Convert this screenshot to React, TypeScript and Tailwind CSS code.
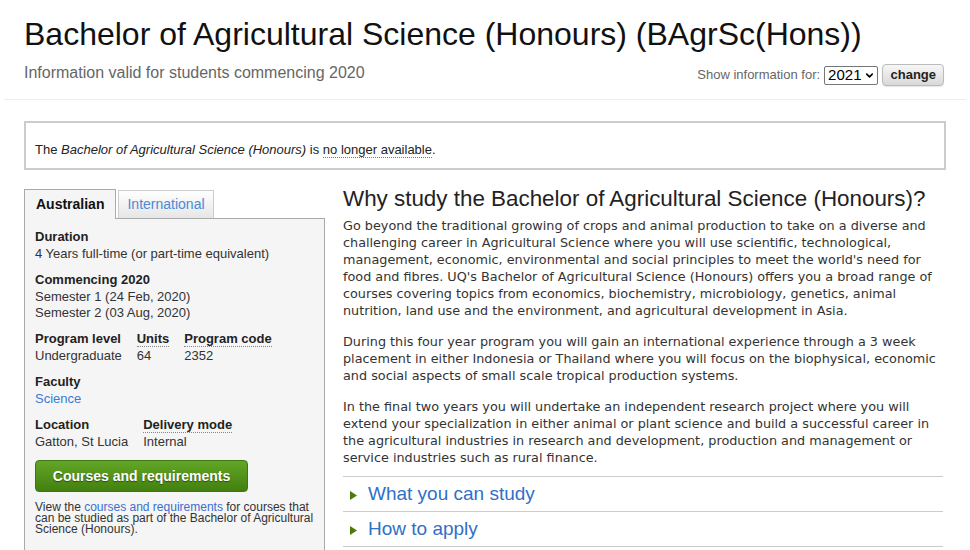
import React from "react";
import { ChevronDown } from "lucide-react";

const arial = "font-['Liberation_Sans',Arial,sans-serif]";

interface FactProps {
  label: string;
  abbr?: boolean;
  children: React.ReactNode;
}

const Fact = (props: FactProps) => {
  return (
    <div className="mr-[15px]">
      <div className="font-bold text-[#222] mb-[1px]">
        <span className={props.abbr ? "border-b border-dotted border-[#888]" : ""}>{props.label}</span>
      </div>
      <div className="text-[#333]">{props.children}</div>
    </div>
  );
};

const AccordionItem = ({ title }: { title: string }) => {
  return (
    <div className="flex items-center h-[35px] border-b border-[#ccc] pl-[7px]">
      <svg width="7" height="9" viewBox="0 0 7 9" className="mr-[11px] mt-[2px]">
        <polygon points="0,0 7,4.5 0,9" fill="#4e7a0c" />
      </svg>
      <span className="text-[19px] text-[#2f70c8]">{title}</span>
    </div>
  );
};

export default function App() {
  return (
    <div className={`${arial} bg-white min-h-[550px] w-[970px] overflow-hidden`}>
      <div className="mx-[4px] border-b border-[#eee] px-[20px] pt-[16px] pb-[13px]">
        <h1 className="text-[32px] leading-[37px] text-[#111]">
          Bachelor of Agricultural Science (Honours) (BAgrSc(Hons))
        </h1>
        <div className="flex items-center justify-between mt-[7px]">
          <p className="text-[16px] leading-[18px] text-[#666]">
            Information valid for students commencing 2020
          </p>
          <div className="flex items-center mr-[2px] mt-[4px]">
            <span className="text-[13px] text-[#666] mr-[4px]">Show information for:</span>
            <div className="flex items-center h-[19px] border border-[#767676] rounded-[2px] pl-[3px] pr-[2px] text-[15px] text-black mr-[4px]">
              2021
              <ChevronDown size={11} strokeWidth={3.5} className="ml-[3px]" />
            </div>
            <button className="h-[22px] px-[7px] rounded-[4px] border border-[#bbb] bg-gradient-to-b from-[#f7f7f7] to-[#d9d9d9] text-[13px] font-bold text-[#222] shadow-[0_1px_1px_rgba(0,0,0,0.1)]">
              change
            </button>
          </div>
        </div>
      </div>

      <div className="px-[24px]">
        <div className="mt-[21px] border-2 border-[#ccc] pt-[19px] pb-[11px] px-[9px] text-[13px] leading-[15px] text-[#222]">
          The <i>Bachelor of Agricultural Science (Honours)</i> is{" "}
          <span className="border-b border-dotted border-[#777]">no longer available</span>.
        </div>

        <div className="flex gap-[18px] mt-[18px]">
          <div className="w-[301px] shrink-0">
            <div className="flex items-end">
              <div className="h-[30px] px-[11px] flex items-center bg-[#f5f5f5] border border-b-0 border-[#aaa] text-[14px] font-bold text-[#111] relative top-[1px]">
                Australian
              </div>
              <div className="h-[28px] ml-[2px] px-[8px] flex items-center bg-gradient-to-b from-white to-[#e6e6e6] border border-[#ccc] border-b-0 text-[14px] text-[#4a8ad6]">
                International
              </div>
            </div>
            <div className="bg-[#f5f5f5] border border-[#aaa] px-[10px] pt-[10px] pb-[30px] text-[13px] leading-[16px]">
              <div className="mb-[10px]">
                <Fact label="Duration">4 Years full-time (or part-time equivalent)</Fact>
              </div>
              <div className="mb-[10px]">
                <Fact label="Commencing 2020">
                  Semester 1 (24 Feb, 2020)
                  <br />
                  Semester 2 (03 Aug, 2020)
                </Fact>
              </div>
              <div className="flex mb-[10px]">
                <Fact label="Program level">Undergraduate</Fact>
                <Fact label="Units" abbr>64</Fact>
                <Fact label="Program code" abbr>2352</Fact>
              </div>
              <div className="mb-[10px]">
                <Fact label="Faculty">
                  <span className="text-[#3a7bd5]">Science</span>
                </Fact>
              </div>
              <div className="flex">
                <Fact label="Location">Gatton, St Lucia</Fact>
                <Fact label="Delivery mode" abbr>Internal</Fact>
              </div>
              <button className="mt-[10px] w-[213px] h-[32px] rounded-[4px] border border-[#3f7410] bg-gradient-to-b from-[#62a625] to-[#43800f] text-white text-[14px] font-bold [text-shadow:0_1px_1px_rgba(0,0,0,0.45)]">
                Courses and requirements
              </button>
              <p className="mt-[10px] text-[12px] leading-[11px] text-[#333]">
                View the <span className="text-[#3a6fcf]">courses and requirements</span> for courses that
                can be studied as part of the Bachelor of Agricultural Science (Honours).
              </p>
            </div>
          </div>

          <div className="w-[603px]">
            <h2 className="text-[22.4px] leading-[24px] text-[#222] mt-[-1px]">
              Why study the Bachelor of Agricultural Science (Honours)?
            </h2>
            <div className="font-['DejaVu_Sans',Verdana,sans-serif] text-[12.8px] leading-[17px] text-[#333] mt-[6px]">
              <p className="mb-[14px]">
                Go beyond the traditional growing of crops and animal production to take on a diverse and
                challenging career in Agricultural Science where you will use scientific, technological,
                management, economic, environmental and social principles to meet the world's need for
                food and fibres. UQ's Bachelor of Agricultural Science (Honours) offers you a broad range of
                courses covering topics from economics, biochemistry, microbiology, genetics, animal
                nutrition, land use and the environment, and agricultural development in Asia.
              </p>
              <p className="mb-[14px]">
                During this four year program you will gain an international experience through a 3 week
                placement in either Indonesia or Thailand where you will focus on the biophysical, economic
                and social aspects of small scale tropical production systems.
              </p>
              <p className="mb-[10px]">
                In the final two years you will undertake an independent research project where you will
                extend your specialization in either animal or plant science and build a successful career in
                the agricultural industries in research and development, production and management or
                service industries such as rural finance.
              </p>
            </div>
            <div className="border-t border-[#ccc] w-[600px]">
              <AccordionItem title="What you can study" />
              <AccordionItem title="How to apply" />
            </div>
          </div>
        </div>
      </div>
    </div>
  );
}
